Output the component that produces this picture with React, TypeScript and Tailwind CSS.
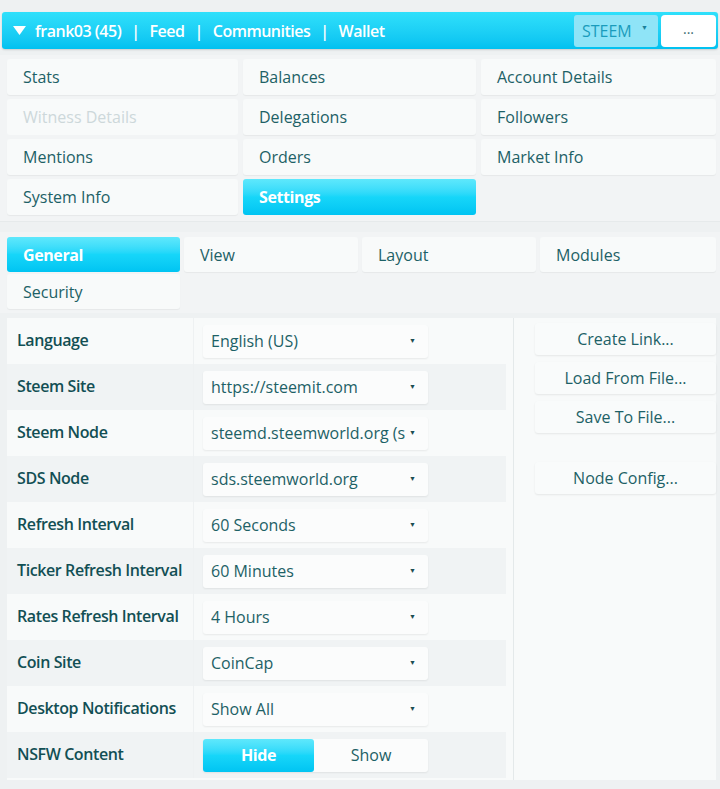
import React from 'react'

const MENU = [
  ['Stats', 'Balances', 'Account Details'],
  ['Witness Details', 'Delegations', 'Followers'],
  ['Mentions', 'Orders', 'Market Info'],
  ['System Info', 'Settings', ''],
]

const SETTINGS = [
  { label: 'Language', value: 'English (US)' },
  { label: 'Steem Site', value: 'https://steemit.com' },
  { label: 'Steem Node', value: 'steemd.steemworld.org (s' },
  { label: 'SDS Node', value: 'sds.steemworld.org' },
  { label: 'Refresh Interval', value: '60 Seconds' },
  { label: 'Ticker Refresh Interval', value: '60 Minutes' },
  { label: 'Rates Refresh Interval', value: '4 Hours' },
  { label: 'Coin Site', value: 'CoinCap' },
  { label: 'Desktop Notifications', value: 'Show All' },
]

const active = 'bg-gradient-to-b from-[#5ee8fc] via-[#16d6f9] to-[#00c4f2] text-white font-bold tracking-[-0.4px]'

function Caret() {
  return <span className="text-[7px] text-[#1b4d52] relative -top-[4px]">▼</span>
}

export default function App() {
  return (
    <div className="w-[720px] h-[789px] bg-[#eef1f2] pt-[12px] font-['Open_Sans',sans-serif] text-[16px] text-[#1d6166] overflow-hidden">
      {/* top bar */}
      <div className="mx-[2px] h-[37px] rounded-[3px] bg-gradient-to-b from-[#2fe0fb] to-[#00c1f0] flex items-center pl-[11px] pr-[2px] shadow-[0_1px_2px_rgba(0,0,0,0.15)]">
        <svg width="13" height="9" viewBox="0 0 13 9" className="mr-[9px]">
          <path d="M0 0 L13 0 L6.5 9 Z" fill="#fff" />
        </svg>
        <div className="text-white font-semibold text-[16px] tracking-[-0.5px] flex gap-[10px]">
          <span>frank03 (45)</span>
          <span>|</span>
          <span>Feed</span>
          <span>|</span>
          <span>Communities</span>
          <span>|</span>
          <span>Wallet</span>
        </div>
        <div className="ml-auto flex gap-[3px]">
          <div className="w-[84px] h-[32px] rounded-[3px] bg-[#8fe4f7] flex items-center pl-[8px] pr-[10px] text-[#1a9cbc]">
            <span>STEEM</span>
            <span className="ml-auto text-[7px] text-[#1a7f99] relative -top-[2px]">▼</span>
          </div>
          <div className="w-[55px] h-[32px] rounded-[4px] bg-white flex items-center justify-center text-[#3b6b70] text-[14px] pb-[4px]">
            ...
          </div>
        </div>
      </div>

      {/* main menu */}
      <div className="mt-[6px] bg-[#f2f4f5] pl-[7px] pr-[4px] py-[4px] grid grid-cols-[231px_233px_235px] content-start gap-x-[5px] gap-y-[4px] h-[167px] border-b border-[#e6eaeb]">
        {MENU.flat().map((m, i) =>
          m === '' ? (
            <div key={i} />
          ) : (
            <div
              key={i}
              className={`h-[36px] rounded-[3px] flex items-center pl-[16px] ${
                m === 'Settings'
                  ? active
                  : m === 'Witness Details'
                  ? 'bg-[#f8fafa] text-[#cdd8da]'
                  : 'bg-[#f8fafa] shadow-[0_1px_1px_rgba(0,0,0,0.05)]'
              }`}
            >
              {m}
            </div>
          )
        )}
      </div>

      {/* tabs */}
      <div className="mt-[10px] bg-[#f2f4f5] pl-[7px] pr-[2px] pt-[5px] pb-[4px] grid grid-cols-[173px_174px_174px_176px] gap-x-[4px] gap-y-[2px]">
        {['General', 'View', 'Layout', 'Modules', 'Security'].map(t => (
          <div
            key={t}
            className={`h-[35px] rounded-[3px] flex items-center pl-[16px] ${
              t === 'General' ? active : 'bg-[#f8fafa] shadow-[0_1px_1px_rgba(0,0,0,0.05)]'
            }`}
          >
            {t}
          </div>
        ))}
      </div>

      {/* settings panel */}
      <div className="mt-[5px] ml-[7px] mr-[4px] bg-[#f8fafa] flex h-[462px]">
        <div className="w-[499px] flex flex-col">
          {SETTINGS.map((s, i) => (
            <div key={s.label} className={`h-[46px] flex items-center ${i % 2 ? 'bg-[#f0f3f4]' : 'bg-[#f8fafa]'}`}>
              <div className="w-[187px] pl-[10px] pb-[2px] font-semibold text-[#124f54] tracking-[-0.4px] border-r border-[#eef1f2] h-full flex items-center">
                {s.label}
              </div>
              <div className="ml-[9px] w-[225px] h-[33px] rounded-[3px] bg-[#fbfcfc] shadow-[0_1px_2px_rgba(0,0,0,0.07)] flex items-center pl-[8px] pr-[12px]">
                <span className="whitespace-nowrap overflow-hidden">{s.value}</span>
                <span className="ml-auto pl-[4px]"><Caret /></span>
              </div>
            </div>
          ))}
          <div className="h-[46px] flex items-center bg-[#f0f3f4]">
            <div className="w-[187px] pl-[10px] pb-[2px] font-semibold text-[#124f54] tracking-[-0.4px] h-full flex items-center border-r border-[#eef1f2]">
              NSFW Content
            </div>
            <div className="ml-[9px] w-[225px] h-[33px] rounded-[3px] bg-[#fbfcfc] shadow-[0_1px_2px_rgba(0,0,0,0.07)] flex">
              <div className={`w-[111px] rounded-[3px] flex items-center justify-center ${active}`}>Hide</div>
              <div className="flex-1 flex items-center justify-center">Show</div>
            </div>
          </div>
        </div>
        <div className="w-[8px] border-r border-[#e4e9ea]" />
        <div className="flex-1 pl-[21px] pt-[5px] flex flex-col gap-[7px]">
          {['Create Link...', 'Load From File...', 'Save To File...'].map(b => (
            <div key={b} className="h-[32px] rounded-[3px] bg-[#f9fbfb] shadow-[0_1px_2px_rgba(0,0,0,0.08)] flex items-center justify-center">
              {b}
            </div>
          ))}
          <div className="mt-[22px] h-[32px] rounded-[3px] bg-[#f9fbfb] shadow-[0_1px_2px_rgba(0,0,0,0.08)] flex items-center justify-center">
            Node Config...
          </div>
        </div>
      </div>
    </div>
  )
}
